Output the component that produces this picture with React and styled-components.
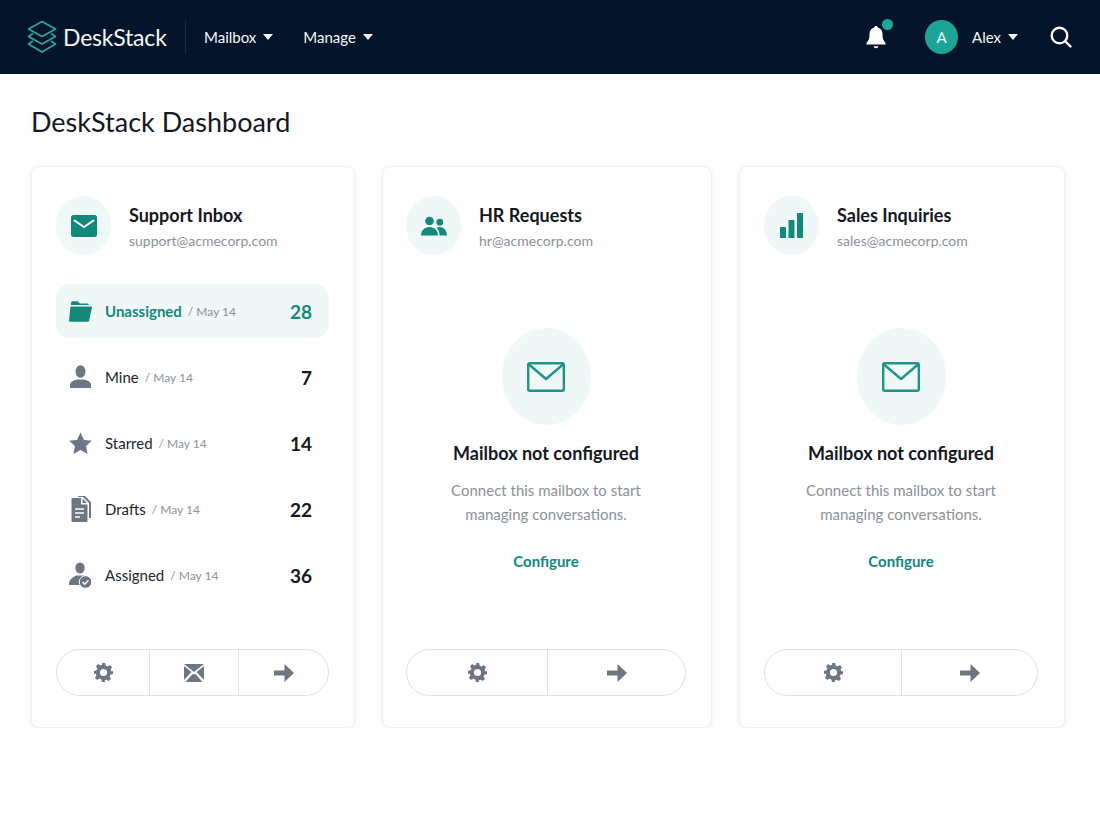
import styled, { createGlobalStyle } from "styled-components";

const TEAL = "#12897b";
const GREY = "#6f7683";

const GlobalStyle = createGlobalStyle`
  html, body {
    margin: 0;
    padding: 0;
    background: #fefefe;
    font-family: "Lato", "Liberation Sans", sans-serif;
    color: #14181f;
  }
  * {
    box-sizing: border-box;
  }
`;

const TopBar = styled.header`
  display: flex;
  align-items: center;
  height: 74px;
  padding: 0 28px 0 27px;
  background: #04152b;
  color: #f3f5f7;
`;

const Brand = styled.div`
  display: flex;
  align-items: center;
  gap: 6px;
  width: 159px;
  height: 34px;
  border-right: 1px solid #1d2c40;
  font-size: 23px;
  font-weight: 400;
  letter-spacing: -0.2px;
`;

const NavItem = styled.div`
  display: flex;
  align-items: center;
  gap: 7px;
  margin-left: ${(props) => props.$offset}px;
  font-size: 15px;
`;

const Caret = styled.span`
  width: 0;
  height: 0;
  border-left: 5.5px solid transparent;
  border-right: 5.5px solid transparent;
  border-top: 6px solid #f3f5f7;
`;

const Spacer = styled.div`
  flex: 1;
`;

const BellWrap = styled.div`
  position: relative;
  display: flex;
  width: 22px;
  height: 24px;
  margin-right: 38px;
`;

const BellDot = styled.span`
  position: absolute;
  top: -6px;
  right: -6px;
  width: 11px;
  height: 11px;
  border-radius: 50%;
  background: #1ba89a;
`;

const Avatar = styled.div`
  display: grid;
  place-items: center;
  width: 33px;
  height: 34px;
  margin-right: 14px;
  border-radius: 50%;
  background: #1ba596;
  font-size: 15px;
`;

const SearchWrap = styled.div`
  display: flex;
  margin-left: 32px;
`;

const Main = styled.main`
  padding: 30px 35px 0 31px;
`;

const Title = styled.h1`
  margin: 0 0 26px;
  font-size: 27px;
  line-height: 36px;
  font-weight: 400;
  color: #14181f;
`;

const Cards = styled.div`
  display: grid;
  grid-template-columns: 324px 330px 326px;
  gap: 27px;
`;

const Card = styled.section`
  display: flex;
  flex-direction: column;
  height: 562px;
  padding: 29px ${(props) => props.$right}px 31px ${(props) => props.$left}px;
  background: #fefefe;
  border: 1px solid #eef0f1;
  border-radius: 8px;
  box-shadow: 0 1px 4px rgba(30, 40, 50, 0.07);
`;

const CardHead = styled.div`
  display: flex;
  gap: 18px;
`;

const HeadCircle = styled.div`
  display: grid;
  place-items: center;
  flex: none;
  width: 55px;
  height: 59px;
  border-radius: 50%;
  background: #f0f7f7;
`;

const HeadText = styled.div`
  display: flex;
  flex-direction: column;
  padding-top: 7px;
`;

const CardName = styled.div`
  font-size: 18px;
  line-height: 24px;
  font-weight: 700;
  color: #14181f;
`;

const CardMail = styled.div`
  margin-top: 5px;
  font-size: 14px;
  line-height: 18px;
  color: #8d9299;
`;

const List = styled.div`
  display: flex;
  flex-direction: column;
  gap: 12px;
  margin-top: 29px;
`;

const Row = styled.div`
  display: flex;
  align-items: center;
  height: 54px;
  padding: 0 17px 0 12px;
  border-radius: 14px;
  background: ${(props) => (props.$active ? "#f0f7f7" : "transparent")};
`;

const RowIcon = styled.div`
  display: grid;
  place-items: center;
  flex: none;
  width: 25px;
  margin-right: 12px;
`;

const RowLabel = styled.span`
  font-size: 15px;
  font-weight: ${(props) => (props.$active ? 700 : 400)};
  color: ${(props) => (props.$active ? TEAL : "#22272e")};
`;

const RowDate = styled.span`
  margin-left: 6px;
  font-size: 12px;
  color: #8d9299;
`;

const RowCount = styled.span`
  margin-left: auto;
  font-size: 19px;
  font-weight: 700;
  color: ${(props) => (props.$active ? TEAL : "#14181f")};
`;

const Empty = styled.div`
  display: flex;
  flex-direction: column;
  align-items: center;
  margin-top: 73px;
  text-align: center;
`;

const EmptyCircle = styled.div`
  display: grid;
  place-items: center;
  width: 89px;
  height: 97px;
  border-radius: 50%;
  background: #f0f7f7;
`;

const EmptyTitle = styled.div`
  margin-top: 16px;
  font-size: 18px;
  line-height: 24px;
  font-weight: 700;
  color: #14181f;
`;

const EmptyText = styled.p`
  margin: 13px 0 0;
  font-size: 15px;
  line-height: 24px;
  color: #8d9299;
`;

const ConfigureLink = styled.a`
  margin-top: 25px;
  font-size: 15px;
  line-height: 20px;
  font-weight: 700;
  color: ${TEAL};
`;

const Actions = styled.div`
  display: grid;
  grid-template-columns: ${(props) => props.$columns};
  height: 47px;
  margin-top: auto;
  border: 1px solid #dfe2e5;
  border-radius: 24px;
`;

const ActionCell = styled.div`
  display: grid;
  place-items: center;
  & + & {
    border-left: 1px solid #dfe2e5;
  }
`;

const Logo = () => (
  <svg width="30" height="34" viewBox="0 0 30 34" fill="none" stroke="#2fa79a" strokeWidth="1.6" strokeLinejoin="round">
    <path d="M15 1.5 28.5 9 15 16.5 1.5 9Z" />
    <path d="M6 13.5 1.5 16.5 15 24 28.5 16.5 24 13.5" />
    <path d="M6 21 1.5 24 15 32 28.5 24 24 21" />
  </svg>
);

const BellIcon = () => (
  <svg width="22" height="24" viewBox="0 0 22 24" fill="#fff">
    <path d="M11 1c1 0 1.700.700 1.800 1.600 3.300.800 4.700 3.600 4.700 7 0 4 1 6.400 3 8.400v1.500h-19V18c2-2 3-4.400 3-8.400 0-3.400 1.400-6.200 4.700-7C9.300 1.700 10 1 11 1Z" />
    <path d="M8.500 21.300h5c-.300 1.200-1.300 1.900-2.500 1.900s-2.200-.700-2.500-1.900Z" />
  </svg>
);

const SearchIcon = () => (
  <svg width="22" height="22" viewBox="0 0 22 22" fill="none" stroke="#fff" strokeWidth="2.400" strokeLinecap="round">
    <circle cx="9.500" cy="9.500" r="7.800" />
    <path d="m15.500 15.500 5 5" />
  </svg>
);

const MailSolid = () => (
  <svg width="26" height="22" viewBox="0 0 26 22">
    <rect width="26" height="22" rx="2.500" fill={TEAL} />
    <path d="M3.500 5.500 13 12l9.500-6.500" fill="none" stroke="#fff" strokeWidth="2" strokeLinecap="round" />
  </svg>
);

const PeopleIcon = () => (
  <svg width="26" height="20" viewBox="0 0 26 20" fill={TEAL}>
    <circle cx="8.500" cy="5" r="4.300" />
    <path d="M0 19.500c0-5 3.500-8.500 8.500-8.500s8.500 3.500 8.500 8.500Z" />
    <circle cx="18.800" cy="6.200" r="3.400" />
    <path d="M18.500 19.500c0-3.500-1-6-3-7.700 1-.600 2-.800 3.300-.800 4 0 7 3.500 7.200 8.500Z" />
  </svg>
);

const BarsIcon = () => (
  <svg width="23" height="25" viewBox="0 0 23 25" fill={TEAL}>
    <rect x="0" y="14" width="6" height="11" rx="0.500" />
    <rect x="8.500" y="7" width="6" height="18" rx="0.500" />
    <rect x="17" y="0" width="6" height="25" rx="0.500" />
  </svg>
);

const MailOutline = () => (
  <svg width="38" height="30" viewBox="0 0 38 30" fill="none" stroke="#1f9488" strokeWidth="2.400" strokeLinejoin="round" strokeLinecap="round">
    <rect x="1.200" y="1.200" width="35.600" height="27.600" rx="1.500" />
    <path d="M2 2.500 19 17 36 2.500" />
  </svg>
);

const FolderIcon = () => (
  <svg width="23" height="21" viewBox="0 0 23 21" fill={TEAL}>
    <path d="M2 4V1.800C2 .800 2.700.200 3.500.200h5L11 2.500h7.500c.800 0 1.300.500 1.300 1.500H2Z" />
    <path d="M2.500 5.500H22c.700 0 1 .400.900 1l-2.700 12.900c-.100.800-.700 1.300-1.500 1.300H1.300c-.800 0-1.300-.500-1.200-1.300L1.300 6.500c.100-.600.500-1 1.200-1Z" />
  </svg>
);

const PersonIcon = () => (
  <svg width="21" height="24" viewBox="0 0 21 24" fill={GREY}>
    <ellipse cx="10.500" cy="6.500" rx="5" ry="6.300" />
    <path d="M0 23v-3c0-3 3-4.500 7-5.500h7c4 1 7 2.500 7 5.500v3Z" />
  </svg>
);

const StarIcon = () => (
  <svg width="23" height="23" viewBox="0 0 23 23" fill={GREY}>
    <path d="M11.500 0.500 15 8l7.800.800-5.800 5.300L18.600 22l-7.100-4-7.100 4 1.600-7.900L.200 8.800 8 8Z" />
  </svg>
);

const DraftIcon = () => (
  <svg width="20" height="26" viewBox="0 0 20 26">
    <path d="M5 0h7l6 6v16H16V7l-6-6H5Z" fill={GREY} transform="translate(2 0)" />
    <path d="M1.500 2H10v6.500h6.500V25a1 1 0 0 1-1 1h-14a1 1 0 0 1-1-1V3a1 1 0 0 1 1-1Z" fill={GREY} />
    <path d="M11.500 2.500 16 7h-4.500Z" fill={GREY} />
    <path d="M4 13h9M4 17h9M4 21h5" stroke="#fefefe" strokeWidth="1.500" />
  </svg>
);

const AssignedIcon = () => (
  <svg width="23" height="27" viewBox="0 0 23 27" fill={GREY}>
    <ellipse cx="11" cy="6" rx="4.700" ry="5.500" />
    <path d="M0 23v-2c0-3 4-6 7-7.500h7.500c1.500.500 2.500 1 3.500 2L12 23Z" />
    <circle cx="16.500" cy="20" r="6.300" stroke="#fefefe" strokeWidth="1" />
    <path d="m13.500 20 2.200 2.200 3.800-4" fill="none" stroke="#fff" strokeWidth="1.400" />
  </svg>
);

const GearIcon = () => (
  <svg width="19" height="19" viewBox="0 0 24 24" fill={GREY}>
    <path fillRule="evenodd" d="M10 0h4l.700 3.300 2.400 1 2.900-1.800 2.800 2.800-1.800 2.900 1 2.400L24 10v4l-3.300.700-1 2.400 1.800 2.900-2.800 2.800-2.900-1.800-2.400 1L14 24h-4l-.700-3.300-2.400-1L4 21.500 1.200 18.700 3 15.800l-1-2.400L0 14v-4l3.300-.700 1-2.400L2.500 4 5.300 1.200 8.200 3l2.400-1ZM12 7.500a4.500 4.500 0 1 0 0 9 4.500 4.500 0 0 0 0-9Z" />
  </svg>
);

const EnvelopeCross = () => (
  <svg width="20" height="18" viewBox="0 0 20 18" fill={GREY}>
    <path d="M0 0h20L10 8Z" />
    <path d="M0 2v14l7.500-8ZM20 2v14l-7.500-8Z" />
    <path d="M1.500 18 8.800 9.800 10 10.800l1.200-1L18.500 18Z" />
  </svg>
);

const ArrowIcon = () => (
  <svg width="20" height="18" viewBox="0 0 20 18" fill={GREY}>
    <path d="M0 6.500h10.500V0L20 9l-9.500 9v-6.500H0Z" />
  </svg>
);

const rows = [
  { icon: <FolderIcon />, label: "Unassigned", count: 28, active: true },
  { icon: <PersonIcon />, label: "Mine", count: 7 },
  { icon: <StarIcon />, label: "Starred", count: 14 },
  { icon: <DraftIcon />, label: "Drafts", count: 22 },
  { icon: <AssignedIcon />, label: "Assigned", count: 36 },
];

function EmptyMailbox() {
  return (
    <Empty>
      <EmptyCircle>
        <MailOutline />
      </EmptyCircle>
      <EmptyTitle>Mailbox not configured</EmptyTitle>
      <EmptyText>
        Connect this mailbox to start
        <br />
        managing conversations.
      </EmptyText>
      <ConfigureLink>Configure</ConfigureLink>
    </Empty>
  );
}

function CardHeader({ icon, name, mail }) {
  return (
    <CardHead>
      <HeadCircle>{icon}</HeadCircle>
      <HeadText>
        <CardName>{name}</CardName>
        <CardMail>{mail}</CardMail>
      </HeadText>
    </CardHead>
  );
}

export default function App() {
  return (
    <>
      <GlobalStyle />
      <TopBar>
        <Brand>
          <Logo />
          DeskStack
        </Brand>
        <NavItem $offset={18}>
          Mailbox <Caret />
        </NavItem>
        <NavItem $offset={30}>
          Manage <Caret />
        </NavItem>
        <Spacer />
        <BellWrap>
          <BellIcon />
          <BellDot />
        </BellWrap>
        <Avatar>A</Avatar>
        <NavItem $offset={0}>
          Alex <Caret />
        </NavItem>
        <SearchWrap>
          <SearchIcon />
        </SearchWrap>
      </TopBar>
      <Main>
        <Title>DeskStack Dashboard</Title>
        <Cards>
          <Card $left={24} $right={25}>
            <CardHeader icon={<MailSolid />} name="Support Inbox" mail="support@acmecorp.com" />
            <List>
              {rows.map((row) => (
                <Row key={row.label} $active={row.active}>
                  <RowIcon>{row.icon}</RowIcon>
                  <RowLabel $active={row.active}>{row.label}</RowLabel>
                  <RowDate>/ May 14</RowDate>
                  <RowCount $active={row.active}>{row.count}</RowCount>
                </Row>
              ))}
            </List>
            <Actions $columns="92px 89px 1fr">
              <ActionCell><GearIcon /></ActionCell>
              <ActionCell><EnvelopeCross /></ActionCell>
              <ActionCell><ArrowIcon /></ActionCell>
            </Actions>
          </Card>
          <Card $left={23} $right={25}>
            <CardHeader icon={<PeopleIcon />} name="HR Requests" mail="hr@acmecorp.com" />
            <EmptyMailbox />
            <Actions $columns="140px 1fr">
              <ActionCell><GearIcon /></ActionCell>
              <ActionCell><ArrowIcon /></ActionCell>
            </Actions>
          </Card>
          <Card $left={24} $right={26}>
            <CardHeader icon={<BarsIcon />} name="Sales Inquiries" mail="sales@acmecorp.com" />
            <EmptyMailbox />
            <Actions $columns="136px 1fr">
              <ActionCell><GearIcon /></ActionCell>
              <ActionCell><ArrowIcon /></ActionCell>
            </Actions>
          </Card>
        </Cards>
      </Main>
    </>
  );
}
